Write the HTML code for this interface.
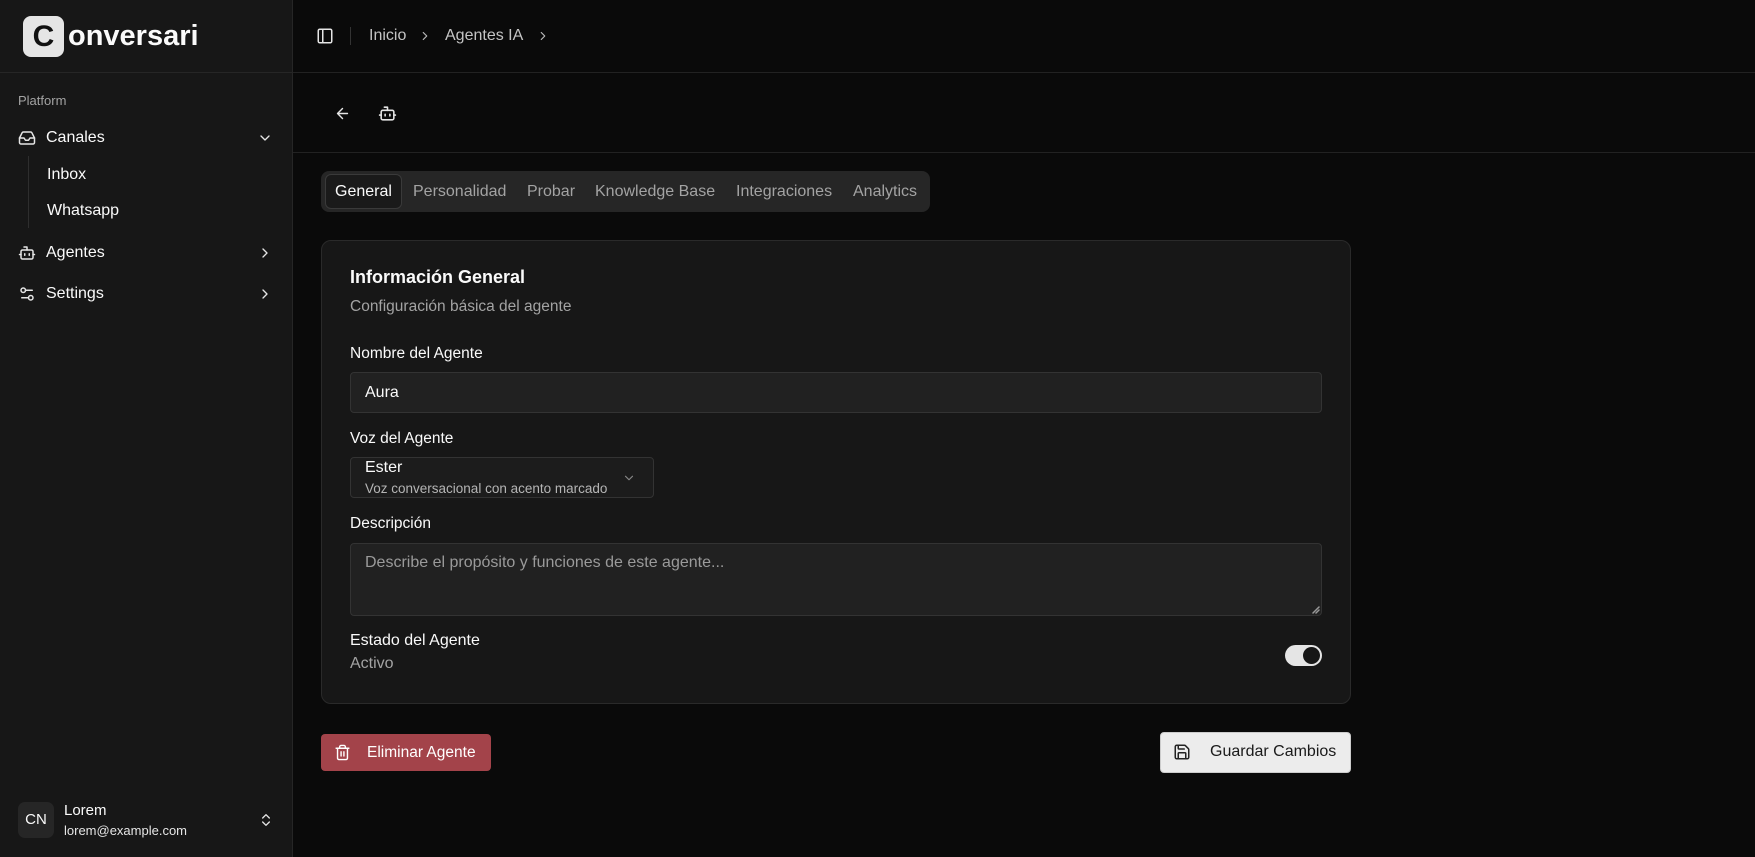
<!DOCTYPE html>
<html><head><meta charset="utf-8"><style>
*{box-sizing:border-box;margin:0;padding:0}
body{width:1755px;height:857px;background:#0a0a0a;font-family:"Liberation Sans",sans-serif;color:#fafafa;position:relative;overflow:hidden}
.abs{position:absolute}
.sb{left:0;top:0;width:293px;height:857px;background:#171717;border-right:1px solid #262626}
.t{position:absolute;white-space:nowrap;line-height:1}
svg{position:absolute;fill:none;stroke:currentColor;stroke-width:2;stroke-linecap:round;stroke-linejoin:round}
.tab{position:absolute;top:183px;font-size:16px;color:#a3a3a3}
</style></head><body>
<div class="abs sb"></div>
<div class="abs" style="left:0;top:72px;width:293px;border-top:1px solid #262626"></div>
<div class="abs" style="left:23px;top:16px;width:41px;height:41px;background:#e5e5e5;border-radius:8px;color:#111;font-weight:bold;font-size:30px;text-align:center;line-height:41px">C</div>
<div class="t" style="left:68px;top:22px;font-size:29px;font-weight:bold">onversari</div>

<div class="t" style="left:18px;top:94px;font-size:13px;color:#a3a3a3">Platform</div>
<svg style="left:18px;top:129px;color:#e5e5e5" width="18" height="18" viewBox="0 0 24 24"><path d="M22 12h-6l-2 3h-4l-2-3H2"/><path d="M5.45 5.11 2 12v6a2 2 0 0 0 2 2h16a2 2 0 0 0 2-2v-6l-3.45-6.89A2 2 0 0 0 16.76 4H7.24a2 2 0 0 0-1.79 1.11z"/></svg>
<div class="t" style="left:46px;top:130px;font-size:16px">Canales</div>
<svg style="left:257px;top:130px;color:#e5e5e5" width="16" height="16" viewBox="0 0 24 24"><path d="m6 9 6 6 6-6"/></svg>
<div class="abs" style="left:28px;top:156px;height:72px;border-left:1px solid #2e2e2e"></div>
<div class="t" style="left:47px;top:167px;font-size:16px">Inbox</div>
<div class="t" style="left:47px;top:203px;font-size:16px">Whatsapp</div>
<svg style="left:18px;top:244px;color:#e5e5e5" width="18" height="18" viewBox="0 0 24 24"><path d="M12 8V4H8"/><rect x="4" y="8" width="16" height="12" rx="2"/><path d="M2 14h2M20 14h2M15 13v2M9 13v2"/></svg>
<div class="t" style="left:46px;top:245px;font-size:16px">Agentes</div>
<svg style="left:257px;top:245px;color:#e5e5e5" width="16" height="16" viewBox="0 0 24 24"><path d="m9 18 6-6-6-6"/></svg>
<svg style="left:18px;top:285px;color:#e5e5e5" width="18" height="18" viewBox="0 0 24 24"><path d="M14 17H5M19 7h-9"/><circle cx="17" cy="17" r="3"/><circle cx="7" cy="7" r="3"/></svg>
<div class="t" style="left:46px;top:286px;font-size:16px">Settings</div>
<svg style="left:257px;top:286px;color:#e5e5e5" width="16" height="16" viewBox="0 0 24 24"><path d="m9 18 6-6-6-6"/></svg>

<div class="abs" style="left:18px;top:802px;width:36px;height:36px;background:#262626;border-radius:7px;font-size:15px;text-align:center;line-height:36px">CN</div>
<div class="t" style="left:64px;top:803px;font-size:15px">Lorem</div>
<div class="t" style="left:64px;top:824px;font-size:13px;color:#e5e5e5">lorem@example.com</div>
<svg style="left:258px;top:812px;color:#e5e5e5" width="16" height="16" viewBox="0 0 24 24"><path d="m7 15 5 5 5-5M7 9l5-5 5 5"/></svg>

<div class="abs" style="left:293px;top:72px;width:1462px;border-top:1px solid #222"></div>
<svg style="left:316px;top:27px;color:#e5e5e5" width="18" height="18" viewBox="0 0 24 24"><rect x="3" y="3" width="18" height="18" rx="2"/><path d="M9 3v18"/></svg>
<div class="abs" style="left:350px;top:27px;height:18px;border-left:1px solid #333"></div>
<div class="t" style="left:369px;top:28px;font-size:16px;color:#c4c4c4">Inicio</div>
<svg style="left:418px;top:29px;color:#bbb" width="14" height="14" viewBox="0 0 24 24"><path d="m9 18 6-6-6-6"/></svg>
<div class="t" style="left:445px;top:28px;font-size:16px;color:#c4c4c4">Agentes IA</div>
<svg style="left:536px;top:29px;color:#bbb" width="14" height="14" viewBox="0 0 24 24"><path d="m9 18 6-6-6-6"/></svg>

<svg style="left:334px;top:105px;color:#e5e5e5" width="17" height="17" viewBox="0 0 24 24"><path d="m12 19-7-7 7-7M19 12H5"/></svg>
<svg style="left:378px;top:104px;color:#e5e5e5" width="19" height="19" viewBox="0 0 24 24"><path d="M12 8V4H8"/><rect x="4" y="8" width="16" height="12" rx="2"/><path d="M2 14h2M20 14h2M15 13v2M9 13v2"/></svg>
<div class="abs" style="left:293px;top:152px;width:1462px;border-top:1px solid #222"></div>

<div class="abs" style="left:321px;top:171px;width:609px;height:41px;background:#262626;border-radius:8px"></div>
<div class="abs" style="left:325px;top:174px;width:77px;height:35px;background:#1a1a1a;border:1px solid #3a3a3a;border-radius:6px"></div>
<div class="tab" style="left:335px;color:#fafafa">General</div>
<div class="tab" style="left:413px">Personalidad</div>
<div class="tab" style="left:527px">Probar</div>
<div class="tab" style="left:595px">Knowledge Base</div>
<div class="tab" style="left:736px">Integraciones</div>
<div class="tab" style="left:853px">Analytics</div>

<div class="abs" style="left:321px;top:240px;width:1030px;height:464px;background:#171717;border:1px solid #2a2a2a;border-radius:10px"></div>
<div class="t" style="left:350px;top:268px;font-size:18px;font-weight:bold">Información General</div>
<div class="t" style="left:350px;top:299px;font-size:15.5px;color:#a3a3a3">Configuración básica del agente</div>
<div class="t" style="left:350px;top:346px;font-size:15.5px">Nombre del Agente</div>
<div class="abs" style="left:350px;top:372px;width:972px;height:41px;background:#212121;border:1px solid #333;border-radius:4px"></div>
<div class="t" style="left:365px;top:385px;font-size:16px">Aura</div>
<div class="t" style="left:350px;top:431px;font-size:15.5px">Voz del Agente</div>
<div class="abs" style="left:350px;top:457px;width:304px;height:41px;background:#1c1c1c;border:1px solid #333;border-radius:4px"></div>
<div class="t" style="left:365px;top:460px;font-size:16px">Ester</div>
<div class="t" style="left:365px;top:482px;font-size:13.5px;color:#b5b5b5">Voz conversacional con acento marcado</div>
<svg style="left:622px;top:471px;color:#888" width="14" height="14" viewBox="0 0 24 24"><path d="m6 9 6 6 6-6"/></svg>
<div class="t" style="left:350px;top:516px;font-size:15.5px">Descripción</div>
<div class="abs" style="left:350px;top:543px;width:972px;height:73px;background:#212121;border:1px solid #333;border-radius:4px"></div>
<div class="t" style="left:365px;top:555px;font-size:16px;color:#9a9a9a">Describe el propósito y funciones de este agente...</div>
<svg style="left:1312px;top:606px;color:#999;stroke-width:1.5" width="8" height="8" viewBox="0 0 8 8"><path d="M7 1 1 7M7 4 4 7"/></svg>
<div class="t" style="left:350px;top:633px;font-size:16px">Estado del Agente</div>
<div class="t" style="left:350px;top:656px;font-size:16px;color:#a3a3a3">Activo</div>
<div class="abs" style="left:1285px;top:645px;width:37px;height:21px;background:#e5e5e5;border-radius:11px"></div>
<div class="abs" style="left:1303px;top:647px;width:17px;height:17px;background:#171717;border-radius:50%"></div>

<div class="abs" style="left:321px;top:734px;width:170px;height:37px;background:#a3434a;border-radius:4px"></div>
<svg style="left:334px;top:744px;color:#fff" width="17" height="17" viewBox="0 0 24 24"><path d="M3 6h18M19 6v14a2 2 0 0 1-2 2H7a2 2 0 0 1-2-2V6M8 6V4a2 2 0 0 1 2-2h4a2 2 0 0 1 2 2v2M10 11v6M14 11v6"/></svg>
<div class="t" style="left:367px;top:745px;font-size:15.5px;color:#fff">Eliminar Agente</div>
<div class="abs" style="left:1160px;top:732px;width:191px;height:41px;background:#ececec;border:1px solid #ccc;border-radius:4px"></div>
<svg style="left:1173px;top:743px;color:#222" width="18" height="18" viewBox="0 0 24 24"><path d="M15.2 3a2 2 0 0 1 1.4.6l3.8 3.8a2 2 0 0 1 .6 1.4V19a2 2 0 0 1-2 2H5a2 2 0 0 1-2-2V5a2 2 0 0 1 2-2z"/><path d="M17 21v-7a1 1 0 0 0-1-1H8a1 1 0 0 0-1 1v7M7 3v4a1 1 0 0 0 1 1h7"/></svg>
<div class="t" style="left:1210px;top:744px;font-size:16px;color:#1a1a1a">Guardar Cambios</div>
</body></html>
